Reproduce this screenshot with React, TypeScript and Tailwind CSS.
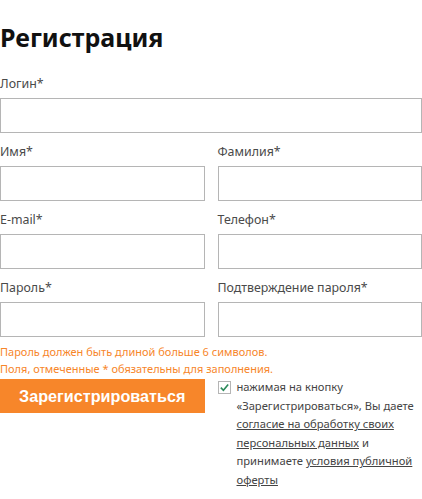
import React from 'react';

const FONT = { fontFamily: '"Noto Sans", "Open Sans", sans-serif' };

const Field = ({ label, className = '' }: { label: string; className?: string }) => (
  <div className={className}>
    <label className="block text-[12.4px] leading-[18px] text-[#4a4a4a]">{label}</label>
    <input type="text" className="mt-[5px] block h-[35px] w-full border border-[#b5b5b5] bg-white px-2 outline-none" />
  </div>
);

export default function App() {
  return (
    <div className="min-h-[499px] w-full bg-white" style={FONT}>
      <h1 className="pt-[19px] text-[25px] font-bold leading-[36px] text-[#111]">Регистрация</h1>
      <form onSubmit={e => e.preventDefault()}>
        <Field label="Логин*" className="mt-[20px]" />
        <div className="grid grid-cols-2 gap-x-[13px]">
          <Field label="Имя*" className="mt-[10px]" />
          <Field label="Фамилия*" className="mt-[10px]" />
          <Field label="E-mail*" className="mt-[10px]" />
          <Field label="Телефон*" className="mt-[10px]" />
          <Field label="Пароль*" className="mt-[10px]" />
          <Field label="Подтверждение пароля*" className="mt-[10px]" />
        </div>
        <div className="mt-[6px] text-[11px] leading-[17px] text-[#f7862a]">
          <p>Пароль должен быть длиной больше 6 символов.</p>
          <p>Поля, отмеченные * обязательны для заполнения.</p>
        </div>
        <div className="mt-[2px] grid grid-cols-2 gap-x-[13px]">
          <div>
            <button
              type="submit"
              className="h-[34px] w-full bg-[#f7862a] text-[16.2px] font-bold text-white"
              style={{ fontFamily: '"Liberation Sans", Arial, sans-serif' }}
            >
              Зарегистрироваться
            </button>
          </div>
          <div className="flex items-start gap-[6px] text-[11.2px] leading-[18.6px] text-[#444]">
            <span className="mt-[2px] flex h-[13px] w-[13px] shrink-0 items-center justify-center border border-[#b5b5b5] bg-white">
              <svg viewBox="0 0 12 12" className="h-[11px] w-[11px]">
                <path d="M2 6.2 L4.8 9 L10 2.8" fill="none" stroke="#2c8a5a" strokeWidth="1.8" />
              </svg>
            </span>
            <p className="-mt-[1px]">
              нажимая на кнопку «Зарегистрироваться», Вы даете{' '}
              <a href="#" className="underline">согласие на обработку своих персональных данных</a> и принимаете{' '}
              <a href="#" className="underline">условия публичной оферты</a>
            </p>
          </div>
        </div>
      </form>
    </div>
  );
}
